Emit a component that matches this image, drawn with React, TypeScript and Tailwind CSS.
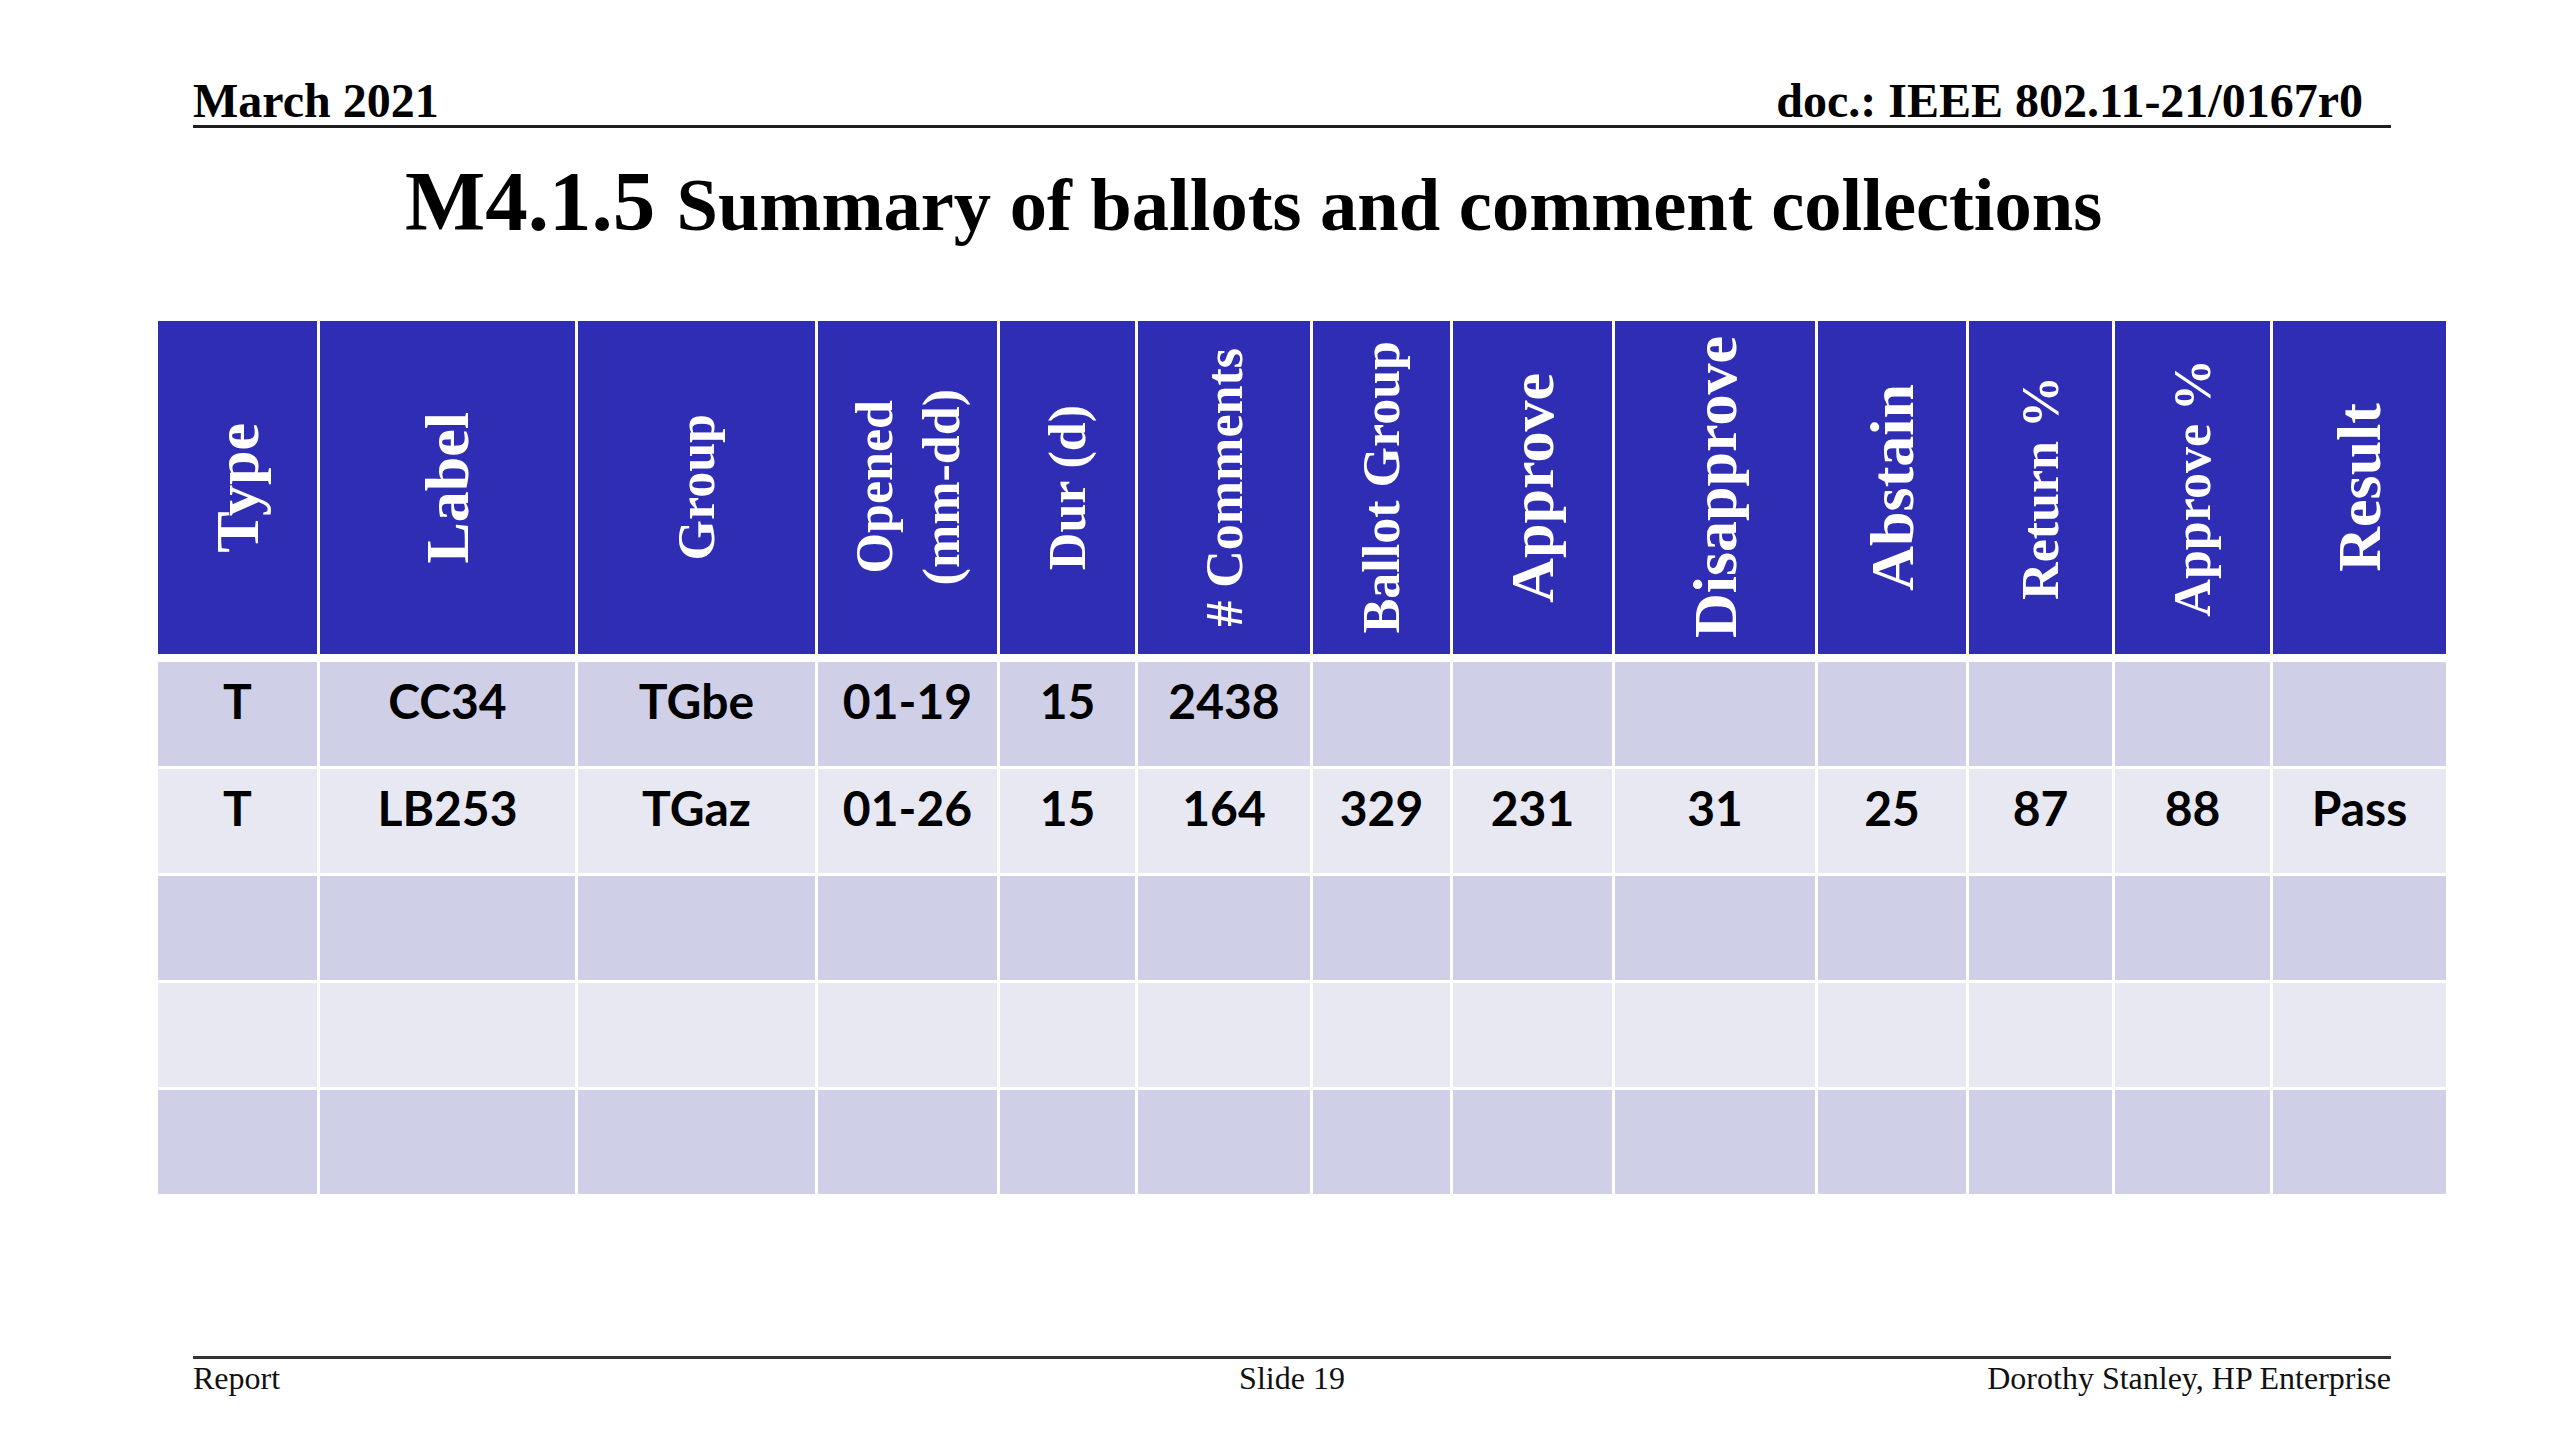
import React from "react";

const serif = "font-['Liberation_Serif','Times_New_Roman',serif]";

type Col = { label: string[]; big?: boolean; width: string };

// widths already net of the 3px white rule between columns
const columns: Col[] = [
  { label: ["Type"], big: true, width: "159px" },
  { label: ["Label"], big: true, width: "255px" },
  { label: ["Group"], width: "237px" },
  { label: ["Opened", "(mm-dd)"], width: "179px" },
  { label: ["Dur (d)"], width: "135px" },
  { label: ["# Comments"], width: "172px" },
  { label: ["Ballot Group"], width: "137px" },
  { label: ["Approve"], big: true, width: "159px" },
  { label: ["Disapprove"], big: true, width: "200px" },
  { label: ["Abstain"], big: true, width: "148px" },
  { label: ["Return %"], width: "143px" },
  { label: ["Approve %"], width: "155px" },
  { label: ["Result"], big: true, width: "173px" },
];

const rows: string[][] = [
  ["T", "CC34", "TGbe", "01-19", "15", "2438", "", "", "", "", "", "", ""],
  ["T", "LB253", "TGaz", "01-26", "15", "164", "329", "231", "31", "25", "87", "88", "Pass"],
  ["", "", "", "", "", "", "", "", "", "", "", "", ""],
  ["", "", "", "", "", "", "", "", "", "", "", "", ""],
  ["", "", "", "", "", "", "", "", "", "", "", "", ""],
];

const gridCols =
  "grid grid-cols-[159px_255px_237px_179px_135px_172px_137px_159px_200px_148px_143px_155px_173px] gap-x-[3px]";

function HeaderCell({ col }: { col: Col }) {
  return (
    <div className="bg-[#2e2db3] h-[333px] flex items-center justify-center">
      <div
        className={`${serif} font-bold text-white text-center [writing-mode:vertical-rl] rotate-180 leading-[67px] ${
          col.big ? "text-[62px]" : "text-[52px]"
        }`}
      >
        {col.label.map((l) => (
          <div key={l} className="whitespace-nowrap">
            {l}
          </div>
        ))}
      </div>
    </div>
  );
}

export default function App() {
  return (
    <div className="w-[2560px] h-[1440px] bg-white flex flex-col text-black">
      {/* top running header */}
      <div
        className={`${serif} font-bold ml-[193px] w-[2198px] pt-[77px] pr-[28px] flex justify-between border-b-[3px] border-[#1f1f1f] text-[48px] leading-none`}
      >
        <span>March 2021</span>
        <span>doc.: IEEE 802.11-21/0167r0</span>
      </div>

      <h1 className={`${serif} font-bold mt-[31px] pl-[405px] text-[85px] leading-none whitespace-nowrap`}>
        M4.1.5 <span className="text-[74.5px]">Summary of ballots and comment collections</span>
      </h1>

      {/* ballot table */}
      <div className="ml-[158px] mt-[77px] w-[2288px]">
        <div className={gridCols}>
          {columns.map((c) => (
            <HeaderCell key={c.label.join(" ")} col={c} />
          ))}
        </div>
        <div className={`${gridCols} gap-y-[3px] mt-[8px]`}>
          {rows.map((r, ri) =>
            r.map((cell, ci) => (
              <div
                key={`${ri}-${ci}`}
                className={`h-[104px] pt-[9px] text-center font-['Lato',sans-serif] font-bold text-[48px] leading-[60px] ${
                  ri % 2 === 0 ? "bg-[#cfd0e8]" : "bg-[#e8e8f3]"
                }`}
              >
                {cell}
              </div>
            ))
          )}
        </div>
      </div>

      {/* footer */}
      <div
        className={`${serif} ml-[193px] w-[2198px] mt-[162px] pt-[3px] border-t-[3px] border-[#333] grid grid-cols-3 text-[32px] leading-none text-[#111]`}
      >
        <span>Report</span>
        <span className="text-center">Slide 19</span>
        <span className="text-right">Dorothy Stanley, HP Enterprise</span>
      </div>
    </div>
  );
}
